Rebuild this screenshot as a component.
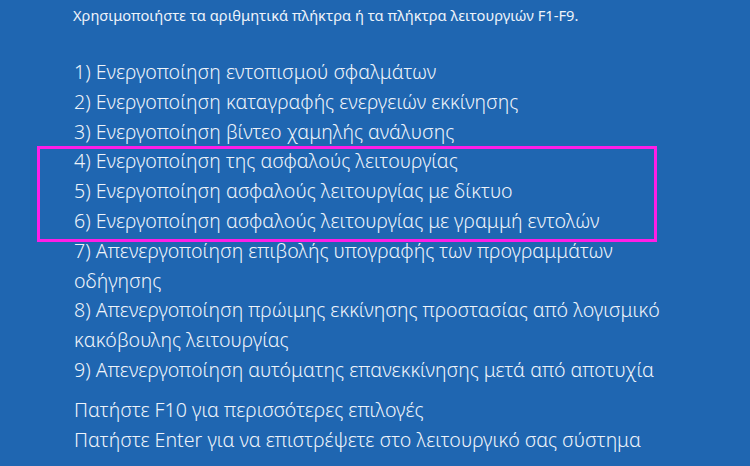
export default function App() {
  const items = [
    "1) Ενεργοποίηση εντοπισμού σφαλμάτων",
    "2) Ενεργοποίηση καταγραφής ενεργειών εκκίνησης",
    "3) Ενεργοποίηση βίντεο χαμηλής ανάλυσης",
    "4) Ενεργοποίηση της ασφαλούς λειτουργίας",
    "5) Ενεργοποίηση ασφαλούς λειτουργίας με δίκτυο",
    "6) Ενεργοποίηση ασφαλούς λειτουργίας με γραμμή εντολών",
    "7) Απενεργοποίηση επιβολής υπογραφής των προγραμμάτων οδήγησης",
    "8) Απενεργοποίηση πρώιμης εκκίνησης προστασίας από λογισμικό κακόβουλης λειτουργίας",
    "9) Απενεργοποίηση αυτόματης επανεκκίνησης μετά από αποτυχία",
  ];

  return (
    <div
      className="relative w-[750px] h-[466px] overflow-hidden bg-[#1f66b1] text-[#eef3fa]"
      style={{ fontFamily: '"Noto Sans", "Open Sans", sans-serif' }}
    >
      <div className="pl-[73px] pt-[6px] text-[14.7px] leading-[18px]">
        Χρησιμοποιήστε τα αριθμητικά πλήκτρα ή τα πλήκτρα λειτουργιών F1-F9.
      </div>

      <div className="pl-[74px] pt-[33px] w-[670px] text-[19.6px] leading-[29.8px] font-light">
        {items.map((t) => (
          <div key={t}>{t}</div>
        ))}
      </div>

      <div className="pl-[74px] pt-[10px] text-[19.6px] leading-[29.8px] font-light">
        <div>Πατήστε F10 για περισσότερες επιλογές</div>
        <div>Πατήστε Enter για να επιστρέψετε στο λειτουργικό σας σύστημα</div>
      </div>

      <div className="absolute left-[37px] top-[146px] w-[620px] h-[96px] border-[3px] border-[#ff1ee6]" />
    </div>
  );
}
